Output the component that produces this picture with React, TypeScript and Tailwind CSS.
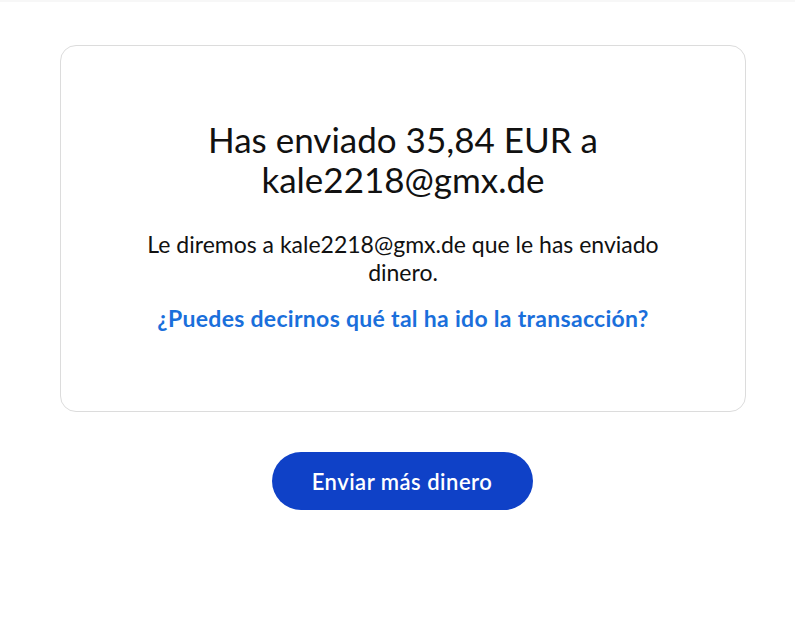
import React from "react";

export default function App() {
  return (
    <div className="min-h-[644px] w-full bg-white" style={{ fontFamily: "Lato, 'Noto Sans', sans-serif" }}>
      <div className="h-[2px] bg-[#f7f7f7]" />
      <div className="ml-[60px] w-[686px] pt-[43px] flex flex-col items-center">
        <div className="w-full h-[367px] rounded-[16px] border border-[#dcdcdc] flex flex-col items-center pt-[73px] px-[60px]">
          <h1 className="text-[35px] leading-[40px] text-[#111] text-center font-normal w-[420px]">
            Has enviado 35,84 EUR a kale2218@gmx.de
          </h1>
          <p className="mt-[31px] text-[23px] leading-[28px] text-[#111] text-center w-[540px]">
            Le diremos a kale2218@gmx.de que le has enviado dinero.
          </p>
          <a className="mt-[18px] text-[23px] leading-[28px] tracking-[0.3px] font-bold text-[#1a6fdb] text-center whitespace-nowrap">
            ¿Puedes decirnos qué tal ha ido la transacción?
          </a>
        </div>
        <button className="mt-[40px] mr-[2px] w-[261px] h-[58px] rounded-full bg-[#0f41c7] text-white text-[22px] font-semibold tracking-[0.5px]">
          Enviar más dinero
        </button>
      </div>
    </div>
  );
}
